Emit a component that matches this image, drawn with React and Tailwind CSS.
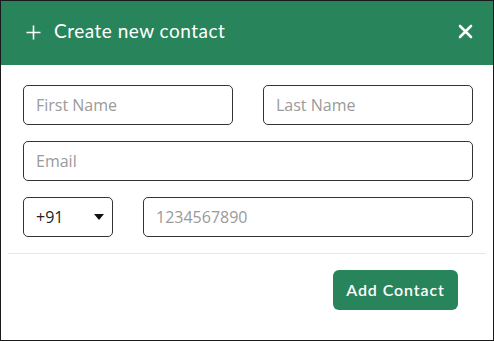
import React from "react";

export default function App() {
  const inputCls =
    "h-[40px] w-full rounded-[5px] border border-[#333] bg-white px-[12px] text-[16px] text-[#333] placeholder:text-[#9a9a9a] outline-none";
  return (
    <div className="w-[494px] h-[341px] bg-white">
      <div
        className="w-full h-full border border-[#1a1a1a] flex flex-col overflow-hidden"
        style={{ fontFamily: '"Open Sans", sans-serif' }}
      >
        <div className="h-[64px] shrink-0 bg-[#28845a] flex items-center pl-[24px] pr-[20px] pb-[3px] text-white">
          <svg width="17" height="17" viewBox="0 0 17 17" className="mr-[12px] mt-[2px]">
            <path d="M8.5 1.5v14M1.5 8.5h14" stroke="white" strokeWidth="1.6" fill="none" />
          </svg>
          <span
            className="text-[19px] tracking-[0.5px]"
            style={{ fontFamily: 'Lato, sans-serif' }}
          >
            Create new contact
          </span>
          <svg width="15" height="15" viewBox="0 0 15 15" className="ml-auto">
            <path d="M2 2l11 11M13 2L2 13" stroke="white" strokeWidth="2.6" strokeLinecap="round" fill="none" />
          </svg>
        </div>
        <div className="pl-[22px] pr-[20px] pt-[20px] flex flex-col gap-[16px]">
          <div className="grid grid-cols-2 gap-[30px]">
            <input className={inputCls} placeholder="First Name" />
            <input className={inputCls} placeholder="Last Name" />
          </div>
          <input className={inputCls} placeholder="Email" />
          <div className="flex gap-[30px]">
            <div className="h-[40px] w-[90px] shrink-0 rounded-[5px] border border-[#333] flex items-center pl-[12px] pr-[8px] text-[16px] text-[#222]">
              <span>+91</span>
              <svg width="10" height="6" viewBox="0 0 10 6" className="ml-auto">
                <path d="M0 0h10L5 6z" fill="#111" />
              </svg>
            </div>
            <input className={inputCls} placeholder="1234567890" />
          </div>
        </div>
        <div className="mx-[7px] mt-[16px] border-t border-[#e6e6e6]" />
        <div className="flex justify-end pr-[35px] pt-[16px]">
          <button
            className="h-[40px] w-[125px] rounded-[6px] bg-[#28845a] text-white text-[16px] font-semibold tracking-[0.9px]"
            style={{ fontFamily: 'Lato, sans-serif' }}
          >
            Add Contact
          </button>
        </div>
      </div>
    </div>
  );
}
